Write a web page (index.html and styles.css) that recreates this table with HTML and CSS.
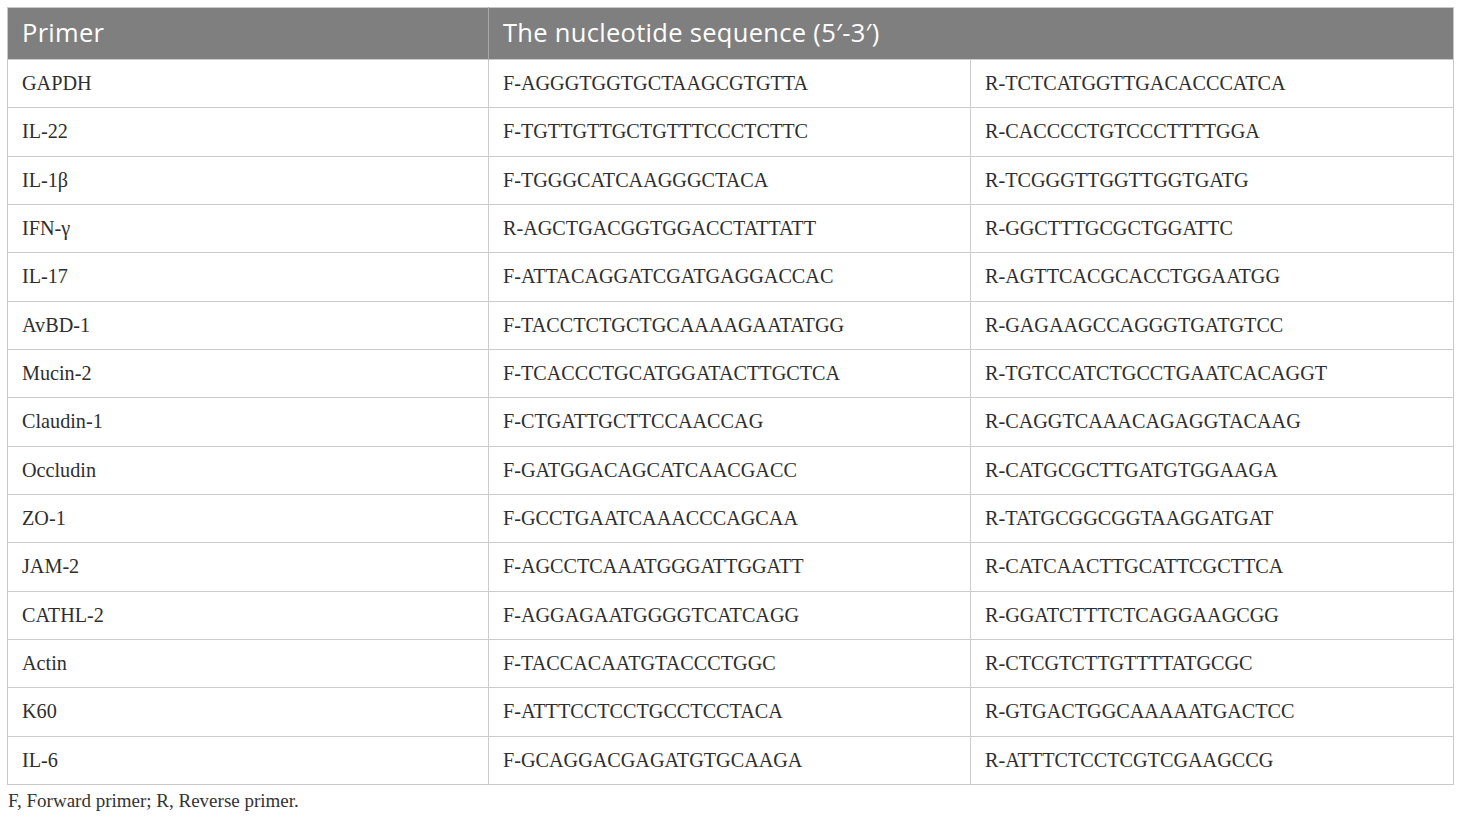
FILE: index.html
```html
<!DOCTYPE html>
<html>
<head>
<meta charset="utf-8">
<link rel="stylesheet" href="styles.css">
</head>
<body>
<div class="wrap">
<table class="primers">
<colgroup><col class="c1"><col class="c2"><col class="c3"></colgroup>
<thead>
<tr><th>Primer</th><th colspan="2">The nucleotide sequence (5′-3′)</th></tr>
</thead>
<tbody>
<tr><td>GAPDH</td><td>F-AGGGTGGTGCTAAGCGTGTTA</td><td>R-TCTCATGGTTGACACCCATCA</td></tr>
<tr><td>IL-22</td><td>F-TGTTGTTGCTGTTTCCCTCTTC</td><td>R-CACCCCTGTCCCTTTTGGA</td></tr>
<tr><td>IL-1β</td><td>F-TGGGCATCAAGGGCTACA</td><td>R-TCGGGTTGGTTGGTGATG</td></tr>
<tr><td>IFN-γ</td><td>R-AGCTGACGGTGGACCTATTATT</td><td>R-GGCTTTGCGCTGGATTC</td></tr>
<tr><td>IL-17</td><td>F-ATTACAGGATCGATGAGGACCAC</td><td>R-AGTTCACGCACCTGGAATGG</td></tr>
<tr><td>AvBD-1</td><td>F-TACCTCTGCTGCAAAAGAATATGG</td><td>R-GAGAAGCCAGGGTGATGTCC</td></tr>
<tr><td>Mucin-2</td><td>F-TCACCCTGCATGGATACTTGCTCA</td><td>R-TGTCCATCTGCCTGAATCACAGGT</td></tr>
<tr><td>Claudin-1</td><td>F-CTGATTGCTTCCAACCAG</td><td>R-CAGGTCAAACAGAGGTACAAG</td></tr>
<tr><td>Occludin</td><td>F-GATGGACAGCATCAACGACC</td><td>R-CATGCGCTTGATGTGGAAGA</td></tr>
<tr><td>ZO-1</td><td>F-GCCTGAATCAAACCCAGCAA</td><td>R-TATGCGGCGGTAAGGATGAT</td></tr>
<tr><td>JAM-2</td><td>F-AGCCTCAAATGGGATTGGATT</td><td>R-CATCAACTTGCATTCGCTTCA</td></tr>
<tr><td>CATHL-2</td><td>F-AGGAGAATGGGGTCATCAGG</td><td>R-GGATCTTTCTCAGGAAGCGG</td></tr>
<tr><td>Actin</td><td>F-TACCACAATGTACCCTGGC</td><td>R-CTCGTCTTGTTTTATGCGC</td></tr>
<tr><td>K60</td><td>F-ATTTCCTCCTGCCTCCTACA</td><td>R-GTGACTGGCAAAAATGACTCC</td></tr>
<tr><td>IL-6</td><td>F-GCAGGACGAGATGTGCAAGA</td><td>R-ATTTCTCCTCGTCGAAGCCG</td></tr>
</tbody>
</table>
<p class="note">F, Forward primer; R, Reverse primer.</p>
</div>
</body>
</html>
```
FILE: styles.css
```css
html, body {
  margin: 0;
  padding: 0;
  background: #fff;
}
.wrap {
  padding: 7px 7px 0 7px;
}
.primers {
  width: 1446px;
  border-collapse: collapse;
  table-layout: fixed;
  border: 1px solid #c8c8c8;
}
.c1 { width: 481px; }
.c2 { width: 482px; }
.c3 { width: 483px; }
.primers th {
  background: #7f7f7f;
  color: #fff;
  font-family: "Open Sans", "Noto Sans", sans-serif;
  font-weight: 400;
  font-size: 25.5px;
  letter-spacing: 0.3px;
  line-height: 30px;
  text-align: left;
  height: 52px;
  padding: 0 14px 3px 14px;
  box-sizing: border-box;
  border-left: 1px solid #a8a8a8;
}
.primers th:first-child { border-left: none; }
.primers td {
  font-family: "Liberation Serif", "Times New Roman", serif;
  font-size: 20.2px;
  color: #2e2e2e;
  height: 48.33px;
  padding: 0 14px;
  box-sizing: border-box;
  border-top: 1px solid #cccccc;
  border-left: 1px solid #cccccc;
  white-space: nowrap;
}
.primers td:first-child { border-left: none; }
.note {
  margin: 5px 0 0 1px;
  font-family: "Liberation Serif", "Times New Roman", serif;
  font-size: 19px;
  color: #333;
}
```
